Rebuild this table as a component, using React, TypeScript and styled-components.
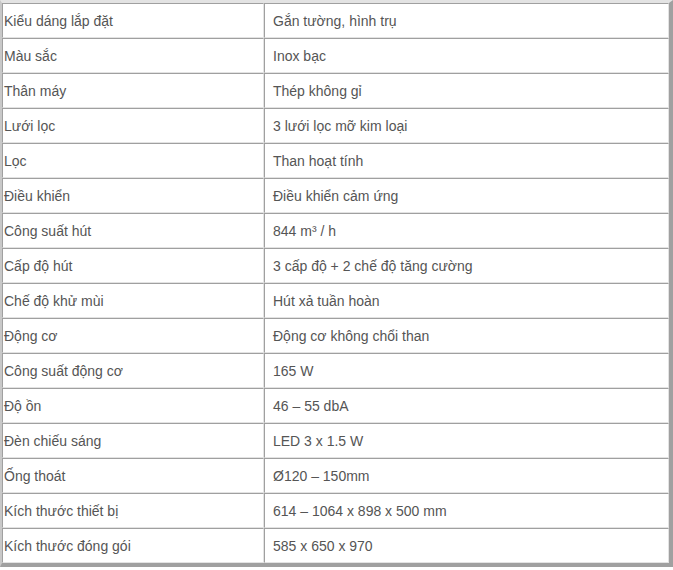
import React from 'react';
import styled, { createGlobalStyle } from 'styled-components';

const GlobalStyle = createGlobalStyle`
  html, body {
    margin: 0;
    padding: 0;
    background: #fff;
  }
`

const Specs = styled.table`
  width: 673px;
  border-collapse: separate;
  border-spacing: 0;
  border-top: 3px solid #e3e3e3;
  border-left: 2px solid #c8c8c8;
  border-right: 4px solid #a0a0a0;
  border-bottom: 4px solid #a0a0a0;
  font-family: "Liberation Sans", Arial, sans-serif;
  font-size: 14px;
  color: #555;
`

const Cell = styled.td<{ $first?: boolean }>`
  height: 33px;
  padding: 0 0 0 ${p => (p.$first ? '1px' : '8px')};
  width: ${p => (p.$first ? '259px' : 'auto')};
  vertical-align: middle;
  border-top: 1px solid #a0a0a0;
  border-left: 1px solid #a0a0a0;
  border-bottom: 1px solid #e3e3e3;
  border-right: 1px solid #e3e3e3;
  white-space: nowrap;
`

const rows: [string, string][] = [
  ['Kiểu dáng lắp đặt', 'Gắn tường, hình trụ'],
  ['Màu sắc', 'Inox bạc'],
  ['Thân máy', 'Thép không gỉ'],
  ['Lưới lọc', '3 lưới lọc mỡ kim loại'],
  ['Lọc', 'Than hoạt tính'],
  ['Điều khiển', 'Điều khiển cảm ứng'],
  ['Công suất hút', '844 m³ / h'],
  ['Cấp độ hút', '3 cấp độ + 2 chế độ tăng cường'],
  ['Chế độ khử mùi', 'Hút xả tuần hoàn'],
  ['Động cơ', 'Động cơ không chổi than'],
  ['Công suất động cơ', '165 W'],
  ['Độ ồn', '46 – 55 dbA'],
  ['Đèn chiếu sáng', 'LED 3 x 1.5 W'],
  ['Ống thoát', 'Ø120 – 150mm'],
  ['Kích thước thiết bị', '614 – 1064 x 898 x 500 mm'],
  ['Kích thước đóng gói', '585 x 650 x 970'],
];

const App: React.FC = () => {
  return (
    <>
      <GlobalStyle />
      <Specs>
        <tbody>
          {rows.map(([label, value]) => (
            <tr key={label}>
              <Cell $first>{label}</Cell>
              <Cell>{value}</Cell>
            </tr>
          ))}
        </tbody>
      </Specs>
    </>
  );
}

export default App;
